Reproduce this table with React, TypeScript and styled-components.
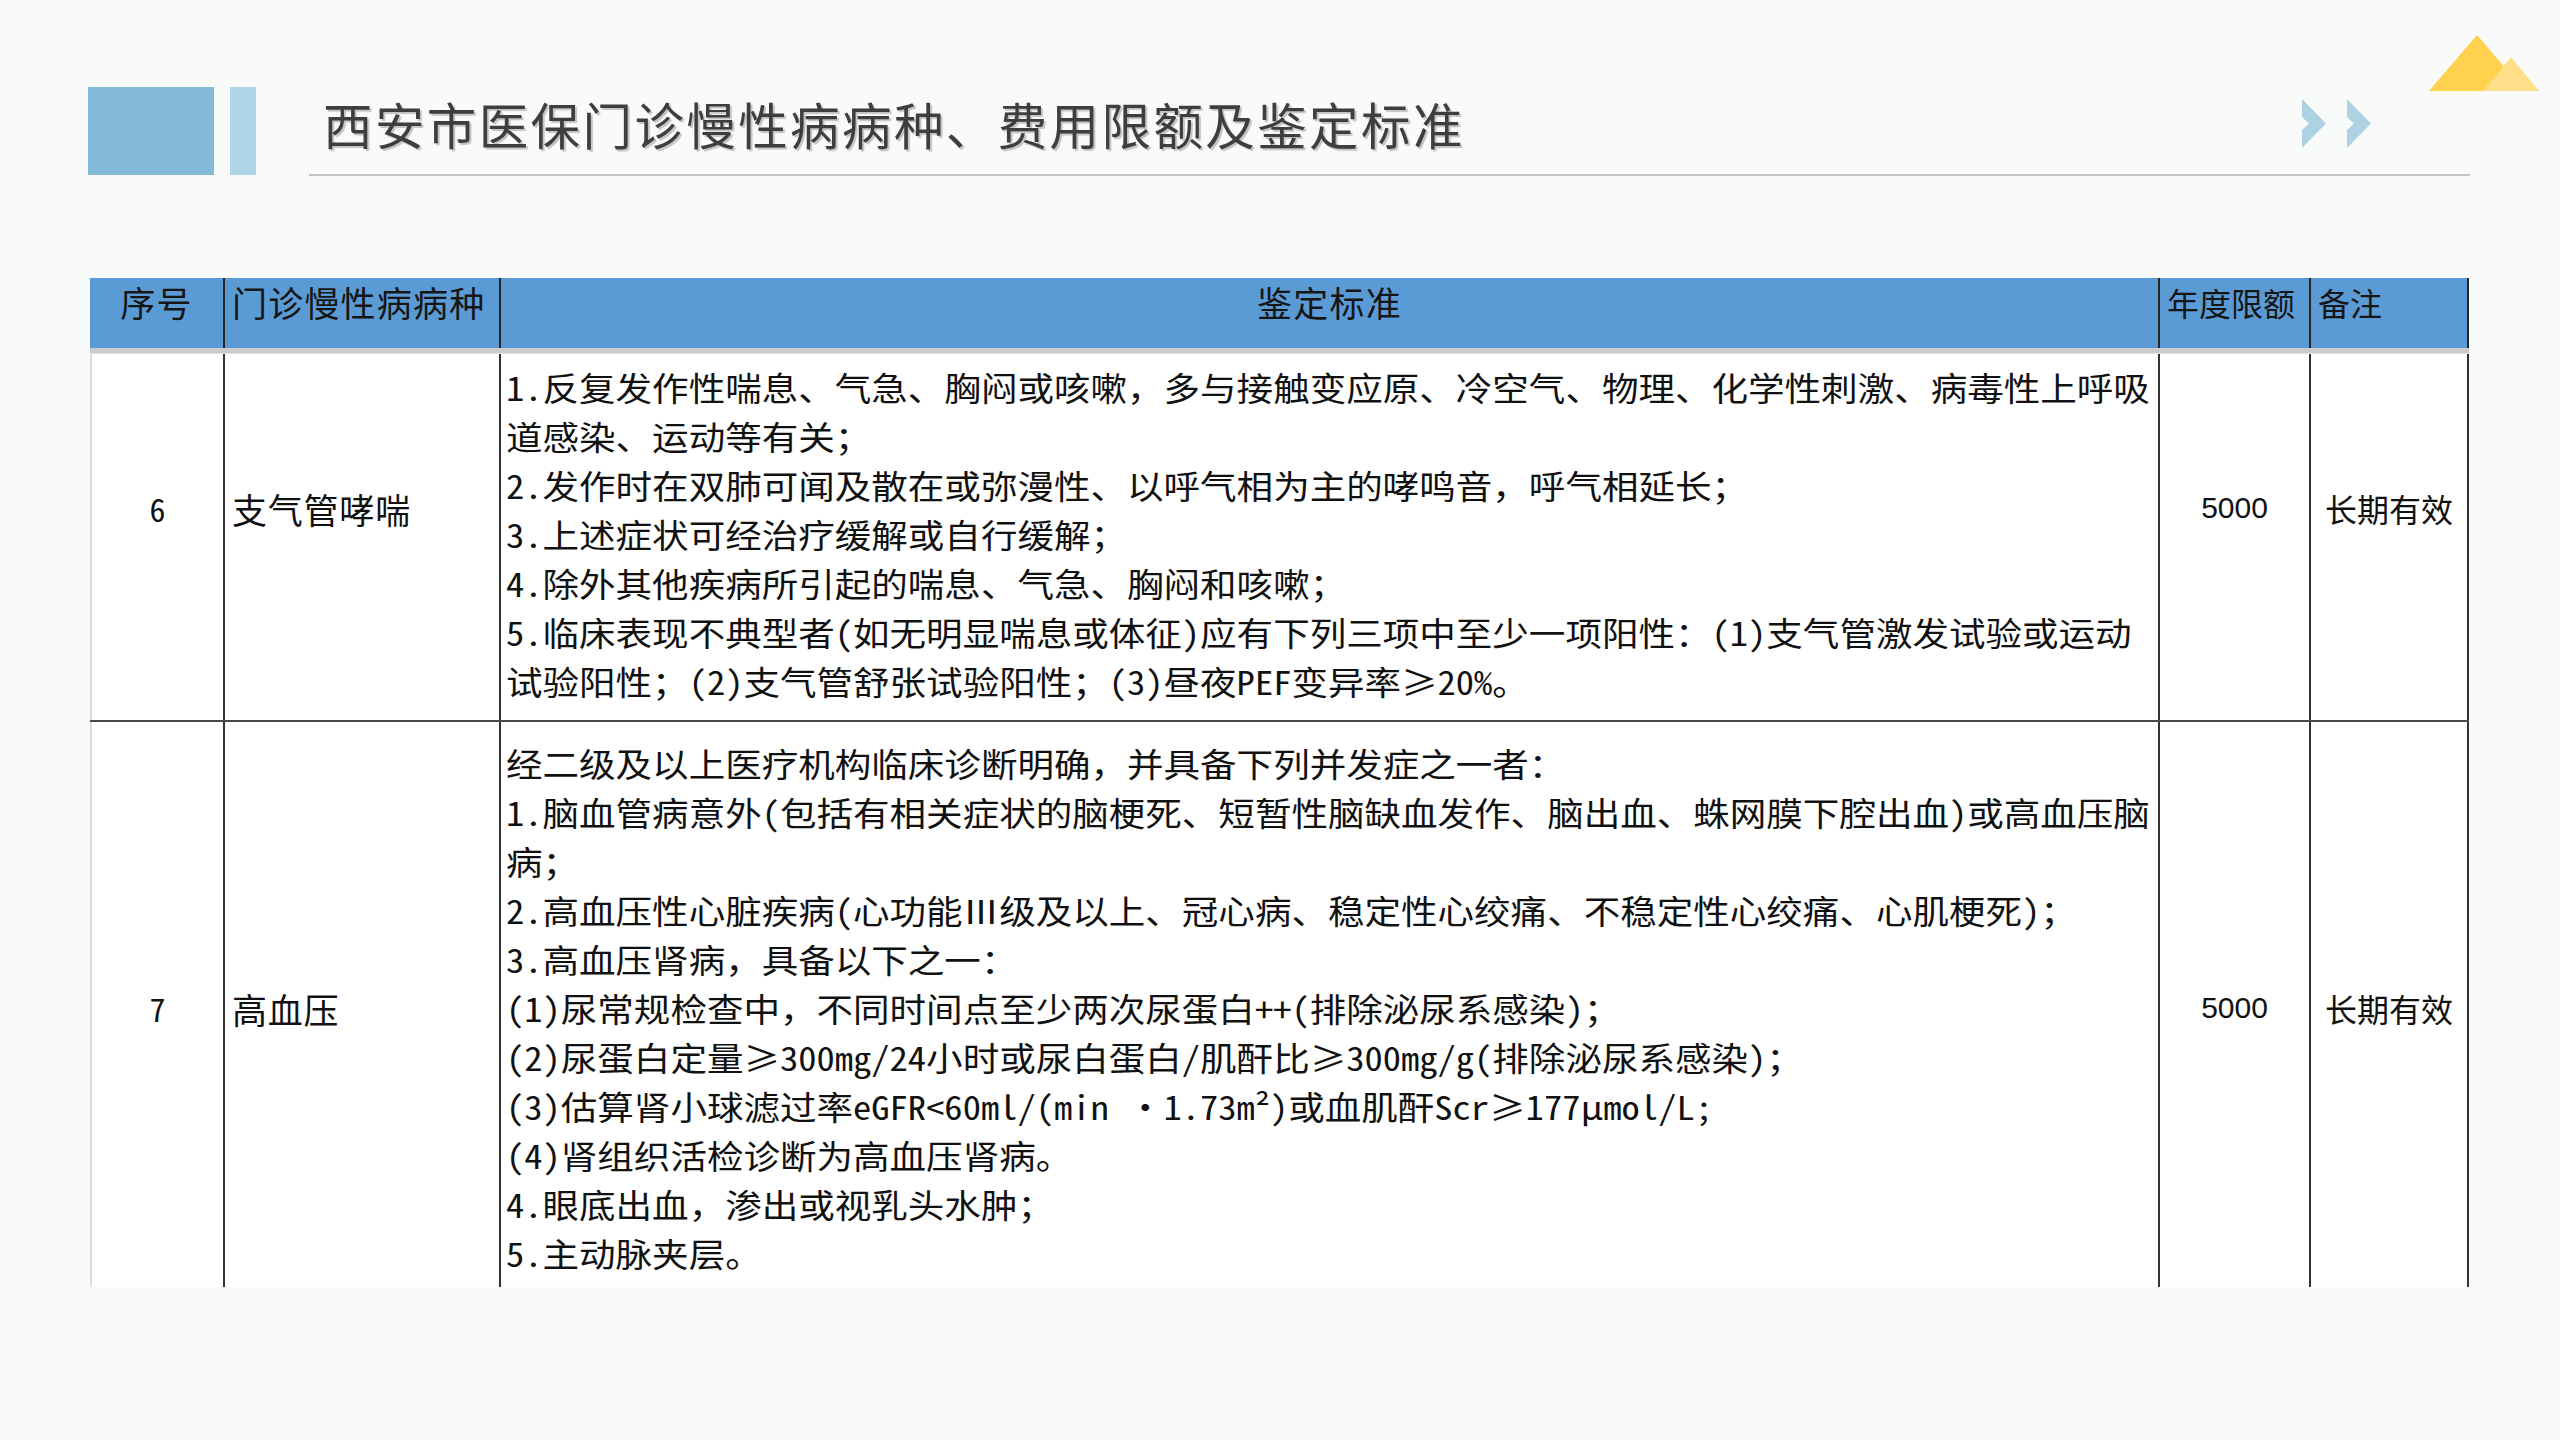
import React from "react";
import styled, { createGlobalStyle } from "styled-components";

const Global = createGlobalStyle`
  html, body { margin: 0; padding: 0; background: #f9fafa; }
  body { font-family: "Noto Sans CJK SC", "Noto Sans", sans-serif; }
`;

const Slide = styled.div`
  width: 2560px;
  height: 1440px;
  box-sizing: border-box;
  padding-top: 35px;
  overflow: hidden;
  background: #f9fafa;
  display: flex;
  flex-direction: column;
`;

const CornerRow = styled.div`
  display: flex;
  justify-content: flex-end;
  padding-right: 21px;
  height: 56px;
  margin-bottom: -4px;
`;

const HeaderRow = styled.header`
  display: flex;
  height: 88px;
  padding-left: 88px;
`;

const DarkBlock = styled.div`
  width: 126px;
  height: 88px;
  background: #83bbd8;
`;

const LightBlock = styled.div`
  width: 26px;
  height: 88px;
  margin-left: 16px;
  background: #aed4e5;
`;

const TitleArea = styled.div`
  box-sizing: border-box;
  margin-left: 53px;
  width: 2161px;
  height: 89px;
  border-bottom: 2px solid #c3c3c3;
  display: flex;
  align-items: center;
  padding: 0 99px 14px 14px;
`;

const Title = styled.h1`
  margin: 0;
  font-family: "Noto Sans CJK SC", sans-serif;
  font-weight: 400;
  font-size: 49.5px;
  letter-spacing: 2.4px;
  line-height: 60px;
  color: #3e3e3e;
  text-shadow: 2px 2px 1px rgba(0, 0, 0, 0.22);
  white-space: nowrap;
`;

const Chevrons = styled.div`
  margin-left: auto;
  display: flex;
  gap: 21px;
  align-items: center;
`;

const Table = styled.section`
  margin: 103px 0 0 90px;
  width: 2379px;
  display: flex;
  flex-direction: column;
`;

const COLS = "135px 276px 1659px 151px 158px";

const HeadGrid = styled.div`
  display: grid;
  grid-template-columns: ${COLS};
  height: 70px;
  background: #5b9bd5;
`;

const HeadCell = styled.div<{ $align: "center" | "left"; $cjk?: boolean }>`
  box-sizing: border-box;
  border-right: 2px solid #262626;
  display: flex;
  align-items: flex-start;
  justify-content: ${(p) => (p.$align === "center" ? "center" : "flex-start")};
  padding-left: ${(p) => (p.$align === "center" ? 0 : 7)}px;
  font-family: "Noto Sans CJK SC", sans-serif;
  font-size: ${(p) => (p.$cjk ? 35 : 32)}px;
  letter-spacing: ${(p) => (p.$cjk ? 1.2 : 0)}px;
  line-height: 48px;
  color: #161616;
  white-space: nowrap;
`;

const Band = styled.div`
  height: 5px;
  background: #cbcbcb;
  border-bottom: 1px solid #e3e3e3;
`;

const BodyRow = styled.div<{ $height: number; $divider?: boolean }>`
  display: grid;
  grid-template-columns: ${COLS};
  height: ${(p) => p.$height}px;
  box-sizing: border-box;
  background: #ffffff;
  border-bottom: ${(p) => (p.$divider ? "2px solid #4a4a4a" : "none")};
`;

const Cell = styled.div<{ $shift: number }>`
  box-sizing: border-box;
  border-right: 2px solid #333333;
  display: flex;
  align-items: center;
  padding-top: ${(p) => (p.$shift > 0 ? p.$shift * 2 : 0)}px;
  padding-bottom: ${(p) => (p.$shift < 0 ? -p.$shift * 2 : 0)}px;
  color: #111111;
  white-space: nowrap;
`;

const IndexCell = styled(Cell)`
  border-left: 2px solid #dcdcdc;
  justify-content: center;
  font-family: "Noto Sans Mono CJK SC", "Noto Sans CJK SC", sans-serif;
  font-size: 32px;
`;

const NameCell = styled(Cell)`
  padding-left: 7px;
  font-family: "Noto Sans CJK SC", sans-serif;
  font-size: 35px;
  letter-spacing: 0.8px;
`;

const CriteriaCell = styled(Cell)`
  padding-left: 5px;
  white-space: normal;
`;

const Criteria = styled.div`
  width: 1488px;
  transform: scaleX(1.107);
  transform-origin: left center;
  font-family: "Noto Sans Mono CJK SC", "Noto Sans CJK SC", sans-serif;
  font-size: 33px;
  line-height: 49px;
  color: #111111;
`;

const Item = styled.p`
  margin: 0;
`;

const AmountCell = styled(Cell)`
  justify-content: center;
  font-family: "Liberation Sans", Arial, sans-serif;
  font-size: 30px;
`;

const NoteCell = styled(Cell)`
  justify-content: center;
  font-family: "Noto Sans CJK SC", sans-serif;
  font-size: 32px;
`;

const Peaks = () => (
  <svg width="110" height="56" viewBox="0 0 110 56" aria-hidden="true">
    <polygon points="48,0 96,56 0,56" fill="#ffd14d" />
    <polygon points="82,22 110,56 54,56" fill="#ffde89" />
  </svg>
);

const Chevron = () => (
  <svg width="24" height="49" viewBox="0 0 24 49" aria-hidden="true">
    <path d="M0 0 L24 24.5 L0 49 L0 31 L7 24.5 L0 18 Z" fill="#add3e3" />
  </svg>
);

type Row = {
  no: string;
  name: string;
  items: string[];
  amount: string;
  note: string;
  height: number;
  sideShift: number;
  textShift: number;
  divider: boolean;
};

const rows: Row[] = [
  {
    no: "6",
    name: "支气管哮喘",
    items: [
      "1.反复发作性喘息、气急、胸闷或咳嗽，多与接触变应原、冷空气、物理、化学性刺激、病毒性上呼吸道感染、运动等有关；",
      "2.发作时在双肺可闻及散在或弥漫性、以呼气相为主的哮鸣音，呼气相延长；",
      "3.上述症状可经治疗缓解或自行缓解；",
      "4.除外其他疾病所引起的喘息、气急、胸闷和咳嗽；",
      "5.临床表现不典型者(如无明显喘息或体征)应有下列三项中至少一项阳性：(1)支气管激发试验或运动试验阳性；(2)支气管舒张试验阳性；(3)昼夜PEF变异率≥20%。",
    ],
    amount: "5000",
    note: "长期有效",
    height: 368,
    sideShift: -29,
    textShift: -3,
    divider: true,
  },
  {
    no: "7",
    name: "高血压",
    items: [
      "经二级及以上医疗机构临床诊断明确，并具备下列并发症之一者：",
      "1.脑血管病意外(包括有相关症状的脑梗死、短暂性脑缺血发作、脑出血、蛛网膜下腔出血)或高血压脑病；",
      "2.高血压性心脏疾病(心功能Ⅲ级及以上、冠心病、稳定性心绞痛、不稳定性心绞痛、心肌梗死)；",
      "3.高血压肾病，具备以下之一：",
      "(1)尿常规检查中，不同时间点至少两次尿蛋白++(排除泌尿系感染)；",
      "(2)尿蛋白定量≥300mg/24小时或尿白蛋白/肌酐比≥300mg/g(排除泌尿系感染)；",
      "(3)估算肾小球滤过率eGFR<60ml/(min ·1.73m²)或血肌酐Scr≥177μmol/L;",
      "(4)肾组织活检诊断为高血压肾病。",
      "4.眼底出血，渗出或视乳头水肿；",
      "5.主动脉夹层。",
    ],
    amount: "5000",
    note: "长期有效",
    height: 565,
    sideShift: 3.5,
    textShift: 3.5,
    divider: false,
  },
];

export default function App() {
  return (
    <>
      <Global />
      <Slide>
        <CornerRow>
          <Peaks />
        </CornerRow>
        <HeaderRow>
          <DarkBlock />
          <LightBlock />
          <TitleArea>
            <Title>西安市医保门诊慢性病病种、费用限额及鉴定标准</Title>
            <Chevrons>
              <Chevron />
              <Chevron />
            </Chevrons>
          </TitleArea>
        </HeaderRow>
        <Table>
          <HeadGrid>
            <HeadCell $align="center" $cjk>序号</HeadCell>
            <HeadCell $align="left" $cjk>门诊慢性病病种</HeadCell>
            <HeadCell $align="center" $cjk>鉴定标准</HeadCell>
            <HeadCell $align="left">年度限额</HeadCell>
            <HeadCell $align="left">备注</HeadCell>
          </HeadGrid>
          <Band />
          {rows.map((r) => (
            <BodyRow key={r.no} $height={r.height} $divider={r.divider}>
              <IndexCell $shift={r.sideShift}>{r.no}</IndexCell>
              <NameCell $shift={r.sideShift}>{r.name}</NameCell>
              <CriteriaCell $shift={r.textShift}>
                <Criteria>
                  {r.items.map((t, i) => (
                    <Item key={i}>{t}</Item>
                  ))}
                </Criteria>
              </CriteriaCell>
              <AmountCell $shift={r.sideShift}>{r.amount}</AmountCell>
              <NoteCell $shift={r.sideShift}>{r.note}</NoteCell>
            </BodyRow>
          ))}
        </Table>
      </Slide>
    </>
  );
}
